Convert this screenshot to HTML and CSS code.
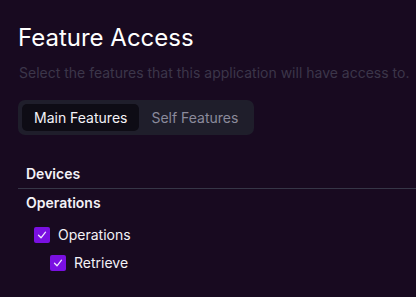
FILE: index.html
```html
<!DOCTYPE html>
<html lang="en">

<head>
    <meta charset="UTF-8">
    <meta name="viewport" content="width=device-width, initial-scale=1.0">
    <title>Feature Access</title>
    <link rel="stylesheet" href="styles.css">
</head>

<body>
    <div class="pageWrapper">
        <h1>Feature Access</h1>
        <p class="subtitle">Select the features that this application will have access to.</p>

        <div class="tabs">
            <button class="tab active">Main Features</button>
            <button class="tab">Self Features</button>
        </div>

        <div class="featureList">
            <div class="group-header bordered">Devices</div>
            <div class="group-header">Operations</div>

            <ul class="checkList">
                <li class="check-item">
                    <span class="checkbox">
                        <svg viewBox="0 0 16 16" width="16" height="16"><polyline points="4.5,8.3 7,10.8 11.5,5.2" /></svg>
                    </span>
                    <span>Operations</span>
                </li>
                <li class="check-item nested">
                    <span class="checkbox">
                        <svg viewBox="0 0 16 16" width="16" height="16"><polyline points="4.5,8.3 7,10.8 11.5,5.2" /></svg>
                    </span>
                    <span>Retrieve</span>
                </li>
            </ul>
        </div>
    </div>
</body>

</html>
```

FILE: styles.css
```css
body {
    margin: 0;
    background-color: #180a20;
    color: #f4f2f7;
    font-family: Inter, "Noto Sans", sans-serif;
    overflow: hidden;
}

.pageWrapper {
    padding: 22px 0 0 18px;
}

h1 {
    margin: 0;
    font-size: 24px;
    line-height: 32px;
    font-weight: 400;
    color: #ffffff;
}

.subtitle {
    margin: 9px 0 0 1px;
    font-size: 14px;
    line-height: 20px;
    color: #3c364a;
    white-space: nowrap;
}

/* Abas */
.tabs {
    display: inline-flex;
    margin-top: 17px;
    padding: 4px;
    background-color: #1f1e2b;
    border-radius: 7px;
}

.tab {
    border: none;
    background: none;
    font-family: inherit;
    font-size: 14px;
    line-height: 27px;
    height: 27px;
    padding: 0 12px;
    color: #8b8a9b;
    border-radius: 5px;
    cursor: pointer;
}

.tab.active {
    background-color: #0e0c15;
    color: #f4f2f7;
}

.featureList {
    margin-top: 25px;
}

.group-header {
    padding: 4px 8px;
    font-size: 14px;
    line-height: 20px;
    font-weight: 600;
}

.bordered {
    border-bottom: 1px solid #363647;
}

.checkList {
    list-style: none;
    margin: 0;
    padding: 4px 0 0 16px;
}

.check-item {
    display: flex;
    align-items: center;
    gap: 8px;
    height: 28px;
    font-size: 14px;
    line-height: 20px;
}

.check-item.nested {
    padding-left: 16px;
}

.checkbox {
    display: flex;
    width: 16px;
    height: 16px;
    border-radius: 2px;
    background-color: #7a10e2;
}

.checkbox polyline {
    fill: none;
    stroke: #f1e6ff;
    stroke-width: 1.3;
    stroke-linecap: round;
    stroke-linejoin: round;
}
```
